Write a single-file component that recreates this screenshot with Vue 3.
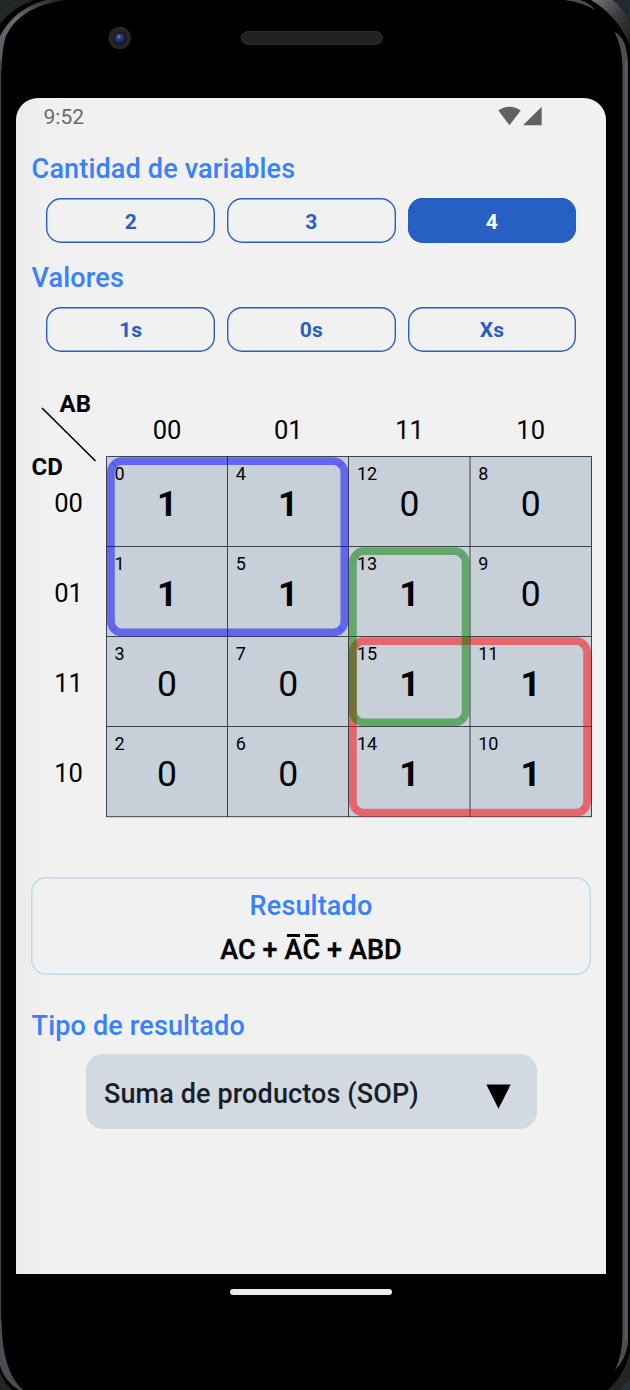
<script setup>
import { ref } from 'vue'

const counts = ['2', '3', '4']
const activeCount = ref('4')
const fills = ['1s', '0s', 'Xs']

const codes = ['00', '01', '11', '10']
const rows = [
  [[0, 1], [4, 1], [12, 0], [8, 0]],
  [[1, 1], [5, 1], [13, 1], [9, 0]],
  [[3, 0], [7, 0], [15, 1], [11, 1]],
  [[2, 0], [6, 0], [14, 1], [10, 1]]
]

// Outer bounds of each grouping, in board units
const groups = [
  { id: 'blue', x: 1, y: 1.3, w: 241.3, h: 179 },
  { id: 'red', x: 243, y: 181.3, w: 242, h: 179.3 },
  { id: 'green', x: 243, y: 91.3, w: 120.5, h: 179 }
]
const seams = (g) => {
  const r = g.x + g.w
  const b = g.y + g.h
  return `M${g.x + 5} ${g.y + 5}l5 5M${r - 5} ${g.y + 5}l-5 5M${g.x + 5} ${b - 5}l5 -5M${r - 5} ${b - 5}l-5 -5`
}
</script>

<template>
  <div class="phone">
    <svg class="frame" viewBox="0 0 630 1390" aria-hidden="true">
      <defs>
        <linearGradient id="rimL" x1="0" y1="1" x2="1" y2="0">
          <stop offset="0" stop-color="#55585d" />
          <stop offset=".5" stop-color="#6a6c71" />
          <stop offset="1" stop-color="#1c1c1e" />
        </linearGradient>
        <linearGradient id="caseR" x1="0" y1="0" x2="1" y2="1">
          <stop offset="0" stop-color="#77777b" />
          <stop offset=".5" stop-color="#3c3c3e" />
          <stop offset="1" stop-color="#1b1b1c" />
        </linearGradient>
        <radialGradient id="lens" cx=".4" cy=".35" r=".65">
          <stop offset="0" stop-color="#8290bb" />
          <stop offset=".3" stop-color="#2d3d75" />
          <stop offset="1" stop-color="#121a3c" />
        </radialGradient>
        <pattern id="mesh" width="2" height="2" patternUnits="userSpaceOnUse">
          <rect width="2" height="2" fill="#191c1b" />
          <rect width="1" height="1" fill="#272a29" />
          <rect x="1" y="1" width="1" height="1" fill="#272a29" />
        </pattern>
      </defs>
      <path d="M0 0H14Q6 4 0 12Z" fill="#20292e" />
      <path d="M0 12Q6 4 14 0H34Q12 8 0 24Z" fill="#262626" />
      <path d="M0 36Q14 9 46 0H66Q20 6 6 36Q2 48 1.5 70H0Z" fill="url(#rimL)" />
      <path d="M0 60H1.2V1335H0Z" fill="#3e4146" />
      <path d="M0 1320H1.5Q2 1372 23 1390H19Q5 1382 0 1366Z" fill="#4a4c52" />
      <path d="M0 1372Q5 1384 12 1390H0Z" fill="#242424" />
      <path d="M613 0H630V22Q624 9 613 0Z" fill="#222a31" />
      <path d="M591 0H613Q624 9 630 22V46Q618 16 591 0Z" fill="url(#caseR)" />
      <path d="M565 0H580Q590 3 595 10Q584 3 565 0Z" fill="#4b4b50" />
      <path d="M614.5 32Q628 38 628 67V1344Q625 1361 615 1370Q622 1356 622.5 1335V67Q622 46 614.5 32Z" fill="#4c4c51" />
      <path d="M625 60H627V1340H625Z" fill="#5a5a60" />
      <path d="M630 1352Q625 1374 608 1390H622L630 1378Z" fill="#242424" />
      <path d="M630 1378L620 1390H630Z" fill="#273038" />
      <circle cx="119.7" cy="38" r="11.2" fill="#262626" />
      <circle cx="120" cy="38.5" r="6.8" fill="#121212" />
      <circle cx="120" cy="38.5" r="5.7" fill="url(#lens)" />
      <rect x="241.5" y="31.5" width="141" height="13" rx="6.5" fill="url(#mesh)" stroke="#303332" stroke-width=".8" />
    </svg>

    <main class="screen">
      <header class="status">
        <span>9:52</span>
        <svg width="46" height="20" viewBox="0 0 46 20" aria-hidden="true">
          <path d="M.3 4.6Q5 .8 11.5 .8T22.7 4.6L11.5 19.2Z" fill="#616161" />
          <path d="M43.7 .8V19.2H25Z" fill="#616161" />
        </svg>
      </header>

      <h2 class="title">Cantidad de variables</h2>
      <div class="choices">
        <button
          v-for="c in counts"
          :key="c"
          :class="{ active: c === activeCount }"
          @click="activeCount = c"
        >{{ c }}</button>
      </div>

      <h2 class="title second">Valores</h2>
      <div class="choices lower">
        <button v-for="f in fills" :key="f">{{ f }}</button>
      </div>

      <section class="map">
        <div class="corner">
          <b class="ab">AB</b>
          <b class="cd">CD</b>
          <svg width="56" height="56" viewBox="0 0 56 56" aria-hidden="true">
            <path d="M1 1L54.5 54" stroke="#000" stroke-width="1.6" />
          </svg>
        </div>
        <div class="cols"><span v-for="c in codes" :key="c">{{ c }}</span></div>
        <div class="side"><span v-for="c in codes" :key="c">{{ c }}</span></div>
        <div class="board">
          <svg class="lines" viewBox="0 0 486 362" aria-hidden="true">
            <g fill="none" stroke="#000" stroke-opacity=".68">
              <path d="M.5 .5H485.5M.5 90.5H485.5M.5 180.5H485.5M.5 270.5H485.5M.5 360.7H485.5" />
              <path d="M.5 .5V361M121.5 .5V361M242.5 .5V361M364 .5V361M485.5 .5V361" />
            </g>
            <g v-for="g in groups" :key="g.id" :class="g.id">
              <rect :x="g.x + 3.9" :y="g.y + 3.9" :width="g.w - 7.8" :height="g.h - 7.8" rx="11" />
              <path :d="seams(g)" />
            </g>
          </svg>
          <template v-for="row in rows">
            <div v-for="[index, value] in row" :key="index" class="cell">
              <small>{{ index }}</small>
              <span :class="{ one: value === 1 }">{{ value }}</span>
            </div>
          </template>
        </div>
      </section>

      <section class="result">
        <h2>Resultado</h2>
        <p>AC + <span class="not">A</span><span class="not">C</span> + ABD</p>
      </section>

      <h2 class="title third">Tipo de resultado</h2>
      <div class="select">
        <span>Suma de productos (SOP)</span>
        <svg width="25" height="25" viewBox="0 0 25 25" aria-hidden="true">
          <path d="M.3 .5H24.7L12.5 24.7Z" fill="#000" />
        </svg>
      </div>
    </main>

    <div class="home"></div>
  </div>
</template>

<style>
body { background: #000; }
</style>

<style scoped>
.phone {
  position: relative;
  box-sizing: border-box;
  width: 630px;
  height: 1390px;
  padding: 98px 24px 0 16px;
  overflow: hidden;
  background: #000;
  font-family: Roboto, "Liberation Sans", sans-serif;
  color: #000;
}
.frame { position: absolute; left: 0; top: 0; width: 630px; height: 1390px; }
.screen {
  position: relative;
  box-sizing: border-box;
  height: 1176px;
  padding: 0 15px;
  border-radius: 22px 22px 0 0;
  background: linear-gradient(90deg, #ebebeb 0, #efefef 20px, #f1f1f1 44px);
}
.status {
  display: flex;
  justify-content: space-between;
  height: 55px;
  padding: 8px 47px 0 12.5px;
  box-sizing: border-box;
  font-size: 21px;
  line-height: 23px;
  color: #6a6a6a;
}
h2, p { margin: 0; }
.title, .result h2 {
  font-size: 27px;
  font-weight: 500;
  line-height: 32px;
  letter-spacing: .16px;
  color: #3880ff;
}
.title { padding-left: .6px; }
.choices {
  display: grid;
  grid-template-columns: repeat(3, 168.6px);
  gap: 12px;
  padding: 13px 0 0 15.4px;
}
.choices button {
  height: 45px;
  padding: 2px 0 0;
  border: 0;
  border-radius: 15px;
  background: transparent;
  box-shadow: inset 0 0 0 1.4px #285fc2;
  font: 700 21px/24px Roboto, "Liberation Sans", sans-serif;
  color: #285fc2;
}
.choices .active { background: #285fc2; color: #fff; }
.second { margin-top: 19px; }
.choices.lower { padding-top: 12.5px; }
.map {
  display: grid;
  grid-template-columns: 75px 486px;
  grid-template-rows: 78px 362px;
  margin-top: 26.5px;
}
.corner { position: relative; font-size: 24px; line-height: 28px; }
.corner b { position: absolute; }
.ab { left: 28.6px; top: 12px; }
.cd { left: .5px; top: 75px; }
.corner svg { position: absolute; left: 10px; top: 29px; }
.cols {
  display: grid;
  grid-template-columns: repeat(4, 121.2px);
  padding: 37px 0 0 .5px;
  text-align: center;
  font-size: 25.5px;
  line-height: 30px;
}
.side {
  display: grid;
  grid-template-rows: repeat(4, 90px);
  align-items: center;
  padding-top: 2px;
  text-align: center;
  font-size: 25.5px;
}
.board {
  position: relative;
  display: grid;
  grid-template-columns: repeat(4, 121.2px);
  grid-template-rows: repeat(4, 90px);
  height: 361px;
  background: #c7cfd9;
}
.lines { position: absolute; left: 0; top: 0; width: 486px; height: 362px; }
.lines rect { fill: none; stroke-width: 7.8; stroke-opacity: .5; }
.lines g path { stroke-width: 1; }
.blue rect { stroke: #00f; }
.red rect { stroke: #f00; }
.green rect { stroke: #008000; }
.blue path { stroke: rgba(0, 0, 255, .35); }
.red path { stroke: rgba(255, 0, 0, .35); }
.green path { stroke: rgba(0, 128, 0, .35); }
.cell {
  position: relative;
  display: flex;
  align-items: center;
  justify-content: center;
  padding: 5px 0 0 1px;
  font-size: 35.5px;
}
.cell small { position: absolute; left: 8.6px; top: 7px; font-size: 18px; line-height: 21px; }
.one { font-weight: 700; }
.result {
  box-sizing: border-box;
  height: 98px;
  width: 560px;
  margin-top: 59px;
  padding-top: 13px;
  border-radius: 15px;
  box-shadow: inset 0 0 0 1.5px #bedcea;
  text-align: center;
}
.result p {
  margin-top: 12px;
  font-size: 27px;
  font-weight: 500;
  line-height: 32px;
  letter-spacing: .1px;
  -webkit-text-stroke: .35px #000;
}
.not { position: relative; }
.not::before {
  content: "";
  position: absolute;
  left: 3px;
  right: 2.5px;
  top: 0;
  height: 2.7px;
  background: #000;
}
.third { margin-top: 35px; }
.select {
  box-sizing: border-box;
  display: flex;
  align-items: center;
  justify-content: space-between;
  width: 450.5px;
  height: 75px;
  margin: 12px 0 0 55px;
  padding: 4px 26px 0 18px;
  border-radius: 17px;
  background: #d2d9e0;
  font-size: 27px;
  font-weight: 500;
  letter-spacing: .12px;
  color: #17202b;
}
.select svg { margin-top: 5px; }
.home {
  width: 162px;
  height: 6px;
  margin: 15px auto 0 213.5px;
  border-radius: 3px;
  background: #ebebeb;
}
</style>
